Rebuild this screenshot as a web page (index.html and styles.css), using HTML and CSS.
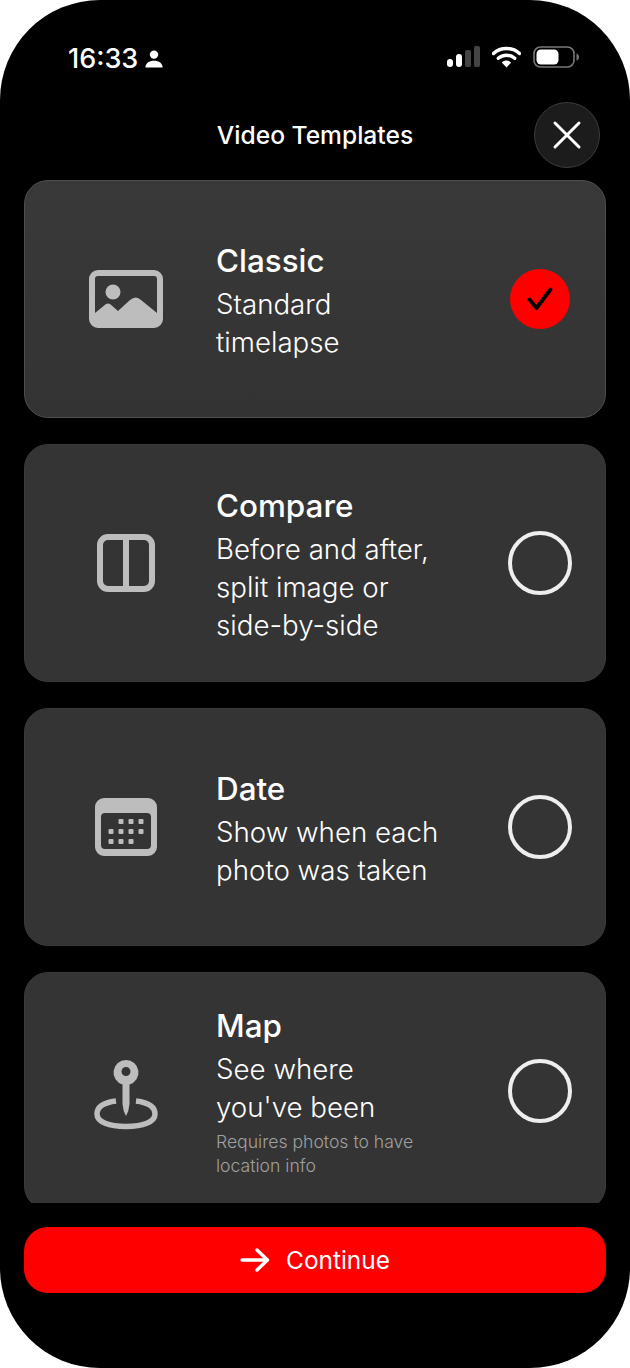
FILE: index.html
```html
<!DOCTYPE html>
<html lang="en">
<head>
  <meta charset="UTF-8">
  <title>Video Templates</title>
  <link rel="stylesheet" href="styles.css">
</head>
<body>

<div class="phone">
  <div class="statusbar">
    <div class="clock">
      <span>16:33</span>
      <svg class="person" width="18" height="18" viewBox="0 0 18 18"><circle cx="9" cy="4.6" r="4.2" fill="#fff"/><path d="M0.4 17.5c0-4.4 3.6-6.8 8.6-6.8s8.600 2.400 8.600 6.800z" fill="#fff"/></svg>
    </div>
    <div class="indicators">
      <svg width="33" height="22" viewBox="0 0 33 22">
        <rect x="0" y="13" width="6" height="8" rx="3" fill="#fff"/>
        <rect x="9" y="8" width="6" height="13" rx="3" fill="#fff"/>
        <rect x="18" y="4" width="6" height="17" rx="2" fill="#444"/>
        <rect x="27" y="0" width="6" height="21" rx="2" fill="#444"/>
      </svg>
      <svg width="29" height="22" viewBox="0 0 29 22">
        <path d="M1.500 7.500C8.500 .8 20.500 .8 27.500 7.500" fill="none" stroke="#fff" stroke-width="3.400" stroke-linecap="round"/>
        <path d="M6.300 12.300C10.800 8.200 18.200 8.200 22.700 12.300" fill="none" stroke="#fff" stroke-width="3.400" stroke-linecap="round"/>
        <path d="M9.800 16.500C12.500 13.900 16.500 13.900 19.200 16.500L14.500 21.500z" fill="#fff"/>
      </svg>
      <svg width="46" height="22" viewBox="0 0 46 22">
        <rect x="1" y="1" width="40" height="20" rx="6.500" fill="none" stroke="#777" stroke-width="1.600"/>
        <rect x="3.500" y="3.500" width="22" height="15" rx="4.500" fill="#fff"/>
        <path d="M43.500 7.500c1.800.5 2.500 2 2.500 3.500s-.7 3-2.500 3.500z" fill="#777"/>
      </svg>
    </div>
  </div>

  <div class="header">
    <div class="title">Video Templates</div>
    <button class="close">
      <svg width="30" height="30" viewBox="0 0 30 30"><path d="M3 3L27 27M27 3L3 27" stroke="#fff" stroke-width="3" stroke-linecap="round"/></svg>
    </button>
  </div>

  <div class="list">
    <div class="card selected">
      <div class="card-icon">
        <svg width="74" height="58" viewBox="0 0 74 58">
          <path fill-rule="evenodd" fill="#bdbdbd" d="M9 0H65A9 9 0 0 1 74 9V49A9 9 0 0 1 65 58H9A9 9 0 0 1 0 49V9A9 9 0 0 1 9 0ZM9 6A3 3 0 0 0 6 9V43L17 34Q19 33 21 34L29 41L41 30Q47 25 52 30L68 43V9A3 3 0 0 0 65 6Z"/>
          <circle cx="24" cy="22" r="7.500" fill="#bdbdbd"/>
        </svg>
      </div>
      <div class="card-text">
        <div class="card-title">Classic</div>
        <div class="card-desc">Standard<br>timelapse</div>
      </div>
      <div class="radio-wrap">
        <div class="check">
          <svg width="26" height="24" viewBox="0 0 26 24"><path d="M2.500 12.500L9.500 21L23.500 2.500" fill="none" stroke="#000" stroke-width="3.800" stroke-linecap="round" stroke-linejoin="round"/></svg>
        </div>
      </div>
    </div>

    <div class="card">
      <div class="card-icon">
        <svg width="58" height="58" viewBox="0 0 58 58">
          <rect x="3" y="3" width="52" height="52" rx="8" fill="none" stroke="#bdbdbd" stroke-width="6"/>
          <rect x="26" y="3" width="6" height="52" fill="#bdbdbd"/>
        </svg>
      </div>
      <div class="card-text">
        <div class="card-title">Compare</div>
        <div class="card-desc">Before and after,<br>split image or<br>side-by-side</div>
      </div>
      <div class="radio-wrap"><div class="radio"></div></div>
    </div>

    <div class="card">
      <div class="card-icon">
        <svg width="62" height="58" viewBox="0 0 62 58">
          <path fill-rule="evenodd" fill="#bdbdbd" d="M9 0H53A9 9 0 0 1 62 9V49A9 9 0 0 1 53 58H9A9 9 0 0 1 0 49V9A9 9 0 0 1 9 0ZM10 15A4 4 0 0 0 6 19V47A4 4 0 0 0 10 51H52A4 4 0 0 0 56 47V19A4 4 0 0 0 52 15Z"/>
          <g fill="#bdbdbd">
            <rect x="23.500" y="21" width="5" height="5" rx="1"/><rect x="33.500" y="21" width="5" height="5" rx="1"/><rect x="43.500" y="21" width="5" height="5" rx="1"/>
            <rect x="13.500" y="31" width="5" height="5" rx="1"/><rect x="23.500" y="31" width="5" height="5" rx="1"/><rect x="33.500" y="31" width="5" height="5" rx="1"/><rect x="43.500" y="31" width="5" height="5" rx="1"/>
            <rect x="13.500" y="41" width="5" height="5" rx="1"/><rect x="23.500" y="41" width="5" height="5" rx="1"/><rect x="33.500" y="41" width="5" height="5" rx="1"/>
          </g>
        </svg>
      </div>
      <div class="card-text">
        <div class="card-title">Date</div>
        <div class="card-desc">Show when each<br>photo was taken</div>
      </div>
      <div class="radio-wrap"><div class="radio"></div></div>
    </div>

    <div class="card last">
      <div class="card-icon">
        <svg width="64" height="70" viewBox="0 0 64 70">
          <path fill-rule="evenodd" fill="#bdbdbd" d="M32 0A12.500 12.500 0 0 1 35.500 24.500V44Q35 51 32 56Q29 51 28.500 44V24.500A12.500 12.500 0 0 1 32 0ZM32 7A4.500 4.500 0 1 0 32 16A4.500 4.500 0 1 0 32 7Z"/>
          <path d="M22 41C10 42.500 3 47 3 54C3 62 15 66.500 32 66.500C49 66.500 61 62 61 54C61 47 54 42.500 42 41" fill="none" stroke="#bdbdbd" stroke-width="5.500"/>
        </svg>
      </div>
      <div class="card-text">
        <div class="card-title">Map</div>
        <div class="card-desc">See where<br>you've been</div>
        <div class="card-note">Requires photos to have<br>location info</div>
      </div>
      <div class="radio-wrap"><div class="radio"></div></div>
    </div>
  </div>

  <div class="footer">
    <button class="continue">
      <svg width="30" height="24" viewBox="0 0 30 24"><path d="M2 12H27M17 2L27.500 12L17 22" fill="none" stroke="#fff" stroke-width="3.400" stroke-linecap="round" stroke-linejoin="round"/></svg>
      <span>Continue</span>
    </button>
  </div>
</div>

</body>
</html>
```

FILE: styles.css
```css
html, body {
  margin: 0;
  padding: 0;
  background: #fff;
}
body {
  font-family: Inter, "Liberation Sans", sans-serif;
  color: #fff;
}
.phone {
  width: 630px;
  height: 1368px;
  background: #000;
  border-radius: 100px;
  overflow: hidden;
  display: flex;
  flex-direction: column;
}
.statusbar {
  height: 102px;
  flex: none;
  padding: 0 51px 0 68px;
  box-sizing: border-box;
  display: flex;
  justify-content: space-between;
  align-items: flex-start;
}
.clock {
  display: flex;
  align-items: center;
  gap: 7px;
  margin-top: 41px;
  height: 34px;
  font-size: 27px;
  font-weight: 500;
}
.person {
  margin-top: 2px;
}
.indicators {
  display: flex;
  align-items: center;
  gap: 12px;
  margin-top: 46px;
}
.header {
  height: 66px;
  flex: none;
  position: relative;
  display: flex;
  align-items: center;
  justify-content: center;
}
.title {
  font-size: 24.6px;
  font-weight: 500;
}
.close {
  position: absolute;
  right: 30px;
  top: 0;
  width: 66px;
  height: 66px;
  border-radius: 50%;
  background: #1c1c1c;
  border: 1px solid #3c3c3c;
  padding: 0;
  display: flex;
  align-items: center;
  justify-content: center;
}
.list {
  height: 1023px;
  flex: none;
  margin-top: 12px;
  padding: 0 24px;
  display: flex;
  flex-direction: column;
  gap: 26px;
  overflow: hidden;
}
.card {
  height: 238px;
  flex: none;
  box-sizing: border-box;
  background: #343434;
  border-radius: 24px;
  border: 1px solid #3a3a3a;
  display: flex;
  align-items: center;
}
.card.selected {
  background: linear-gradient(#393939, #333);
  border-color: #4e4e4e;
}
.card.last {
  align-items: flex-start;
}
.card-icon {
  width: 191px;
  flex: none;
  padding-left: 11px;
  box-sizing: border-box;
  display: flex;
  justify-content: center;
}
.card-text {
  flex: 1;
  padding-top: 4px;
}
.card-title {
  font-size: 31.4px;
  font-weight: 500;
  line-height: 38px;
}
.card-desc {
  font-size: 27.7px;
  font-weight: 300;
  line-height: 38px;
  margin-top: 5px;
}
.card-note {
  font-size: 17.6px;
  font-weight: 300;
  line-height: 24px;
  color: #a0a0a0;
  margin-top: 4px;
}
.radio-wrap {
  width: 130px;
  flex: none;
  display: flex;
  justify-content: center;
}
.radio {
  width: 64px;
  height: 64px;
  box-sizing: border-box;
  border: 4px solid #eee;
  border-radius: 50%;
}
.check {
  width: 60px;
  height: 60px;
  border-radius: 50%;
  background: #f00;
  display: flex;
  align-items: center;
  justify-content: center;
}
.last .card-icon {
  margin-top: 87px;
}
.last .card-text {
  margin-top: 30px;
}
.last .radio-wrap {
  margin-top: 86px;
}
.footer {
  padding: 24px 24px 0;
}
.continue {
  width: 100%;
  height: 66px;
  background: #f00;
  border: 0;
  border-radius: 24px;
  color: #fff;
  font-family: inherit;
  font-size: 24.4px;
  font-weight: 400;
  display: flex;
  align-items: center;
  justify-content: center;
  gap: 16px;
}
```
